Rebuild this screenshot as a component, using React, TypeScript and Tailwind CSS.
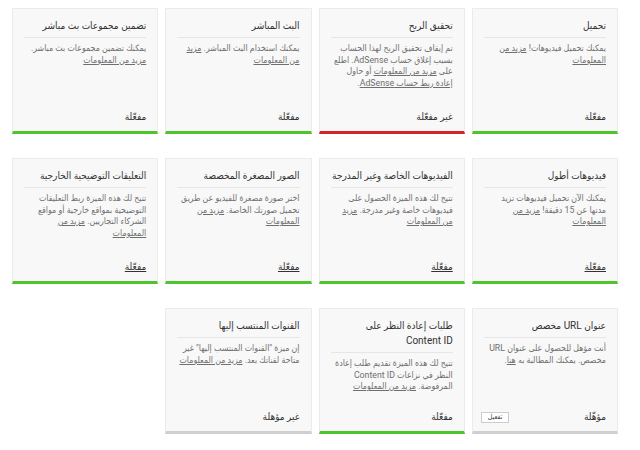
import React from 'react';

type Status = 'on' | 'off' | 'eligible' | 'none';

interface Feature {
    title: React.ReactNode;
    body: React.ReactNode;
    status: string;
    kind: Status;
    underlineStatus?: boolean;
}

const More = () => <a className="underline">مزيد من المعلومات</a>;

const features: Feature[] = [
    { title: 'تحميل', body: <>يمكنك تحميل فيديوهات! <More /></>, status: 'مفعّلة', kind: 'on' },
    {
        title: 'تحقيق الربح',
        body: <>تم إيقاف تحقيق الربح لهذا الحساب بسبب إغلاق حساب AdSense. اطلع على <More /> أو حاول <a className="underline">إعادة ربط حساب AdSense</a>.</>,
        status: 'غير مفعّلة',
        kind: 'off',
    },
    { title: 'البث المباشر', body: <>يمكنك استخدام البث المباشر. <More /></>, status: 'مفعّلة', kind: 'on' },
    { title: 'تضمين مجموعات بث مباشر', body: <>يمكنك تضمين مجموعات بث مباشر. <More /></>, status: 'مفعّلة', kind: 'on' },
    { title: 'فيديوهات أطول', body: <>يمكنك الآن تحميل فيديوهات تزيد مدتها عن 15 دقيقة! <More /></>, status: 'مفعّلة', kind: 'on', underlineStatus: true },
    { title: 'الفيديوهات الخاصة وغير المدرجة', body: <>تتيح لك هذه الميزة الحصول على فيديوهات خاصة وغير مدرجة. <More /></>, status: 'مفعّلة', kind: 'on', underlineStatus: true },
    { title: 'الصور المصغرة المخصصة', body: <>اختر صورة مصغرة للفيديو عن طريق تحميل صورتك الخاصة. <More /></>, status: 'مفعّلة', kind: 'on', underlineStatus: true },
    { title: 'التعليقات التوضيحية الخارجية', body: <>تتيح لك هذه الميزة ربط التعليقات التوضيحية بمواقع خارجية أو مواقع الشركاء التجاريين. <More /></>, status: 'مفعّلة', kind: 'on', underlineStatus: true },
    { title: 'عنوان URL مخصص', body: <>أنت مؤهل للحصول على عنوان URL مخصص. يمكنك المطالبة به <a className="underline">هنا</a>.</>, status: 'مؤهّلة', kind: 'eligible' },
    { title: 'طلبات إعادة النظر على Content ID', body: <>تتيح لك هذه الميزة تقديم طلب إعادة النظر في نزاعات Content ID المرفوضة. <More /></>, status: 'مفعّلة', kind: 'on' },
    { title: 'القنوات المنتسب إليها', body: <>إن ميزة "القنوات المنتسب إليها" غير متاحة لقناتك بعد. <More /></>, status: 'غير مؤهلة', kind: 'none' },
];

const barColor: Record<Status, string> = {
    on: 'border-b-[#4cc62a]',
    off: 'border-b-[#d42424]',
    eligible: 'border-b-[#d0d0d0]',
    none: 'border-b-[#d0d0d0]',
};

const FeatureCard: React.FC<{ f: Feature }> = ({ f }) => (
    <div className={`h-[126px] flex flex-col bg-[#f8f8f8] border border-[#ebebeb] border-b-[3px] ${barColor[f.kind]} px-[11px]`}>
        <div className="pt-[9px] pb-[4px] border-b border-[#e6e6e6] text-[10px] leading-[15px] text-[#333]">{f.title}</div>
        <p className="mt-[5px] text-[8.75px] leading-[11.7px] text-[#6f6f6f]">{f.body}</p>
        <div className="mt-auto mb-[7px] flex items-center justify-between">
            <span className={`text-[10px] leading-[14px] text-[#333] ${f.underlineStatus ? 'underline' : ''}`}>{f.status}</span>
            {f.kind === 'eligible' && (
                <button className="h-[11px] px-[6px] bg-white border border-[#ccc] text-[7px] leading-[9px] text-[#444] -ml-[3px]">تفعيل</button>
            )}
        </div>
    </div>
);

export default function App() {
    return (
        <div dir="rtl" className="w-[640px] h-[450px] bg-white pt-[8px] pr-[22px] pl-[12px]" style={{ fontFamily: 'Roboto, "DejaVu Sans Condensed", "DejaVu Sans", sans-serif' }}>
            <div className="grid grid-cols-4 gap-x-[7px] gap-y-[24px]">
                {features.map((f, i) => (
                    <FeatureCard key={i} f={f} />
                ))}
            </div>
        </div>
    );
}
